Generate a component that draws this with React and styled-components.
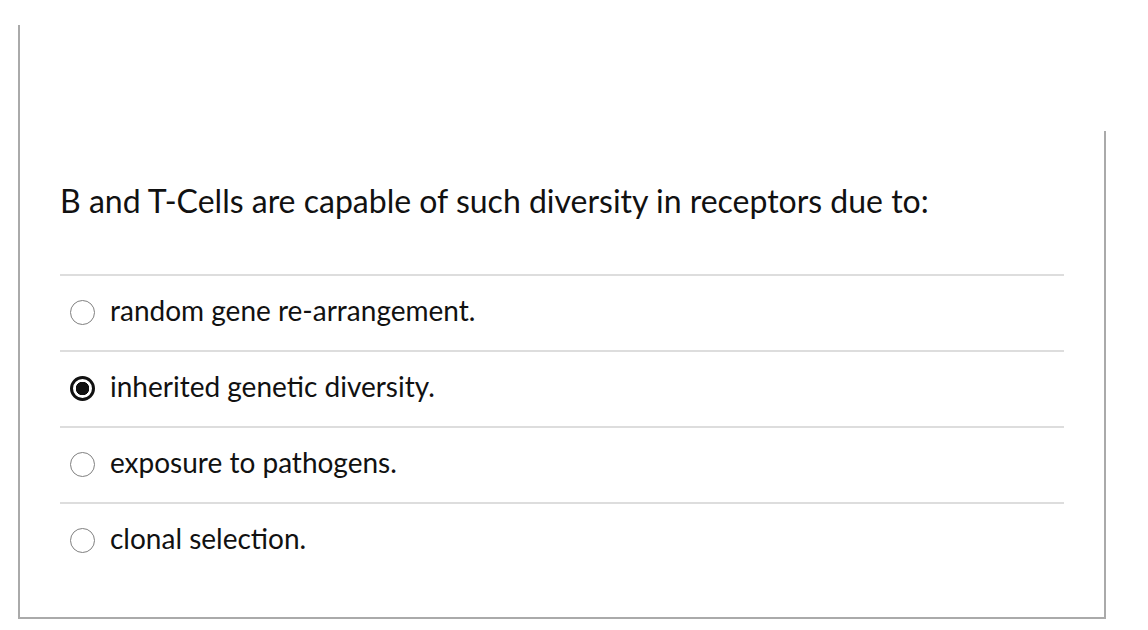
import React, { useState } from "react";
import styled, { createGlobalStyle } from "styled-components";

const GlobalStyle = createGlobalStyle`
  html, body {
    margin: 0;
    padding: 0;
    background: #fff;
  }
  body {
    font-family: Lato, "Liberation Sans", sans-serif;
    color: #111;
  }
`;

const options = [
  "random gene re-arrangement.",
  "inherited genetic diversity.",
  "exposure to pathogens.",
  "clonal selection.",
];

function App() {
  const [picked, setPicked] = useState(1);

  return (
    <>
      <GlobalStyle />
      <Frame>
        <TopGap />
        <QuestionPanel>
          <Prompt>B and T-Cells are capable of such diversity in receptors due to:</Prompt>
          <Answers>
            {options.map((text, i) => (
              <Answer key={text} onClick={() => setPicked(i)}>
                <Radio $checked={picked === i} />
                <AnswerText>{text}</AnswerText>
              </Answer>
            ))}
          </Answers>
        </QuestionPanel>
      </Frame>
    </>
  );
}

export default App;

const Frame = styled.div`
  margin: 25px 0 0 18px;
  width: 1088px;
  height: 594px;
  box-sizing: border-box;
  border-left: 2px solid #aaa;
  border-bottom: 2px solid #aaa;
  display: flex;
  flex-direction: column;
`;

const TopGap = styled.div`
  height: 106px;
  flex: none;
`;

const QuestionPanel = styled.div`
  flex: 1;
  border-right: 2px solid #aaa;
  padding: 51px 40px 0 40px;
`;

const Prompt = styled.p`
  margin: 0 0 54px 0;
  font-size: 32px;
  line-height: 1.2;
  color: #111;
`;

const Answers = styled.div`
  display: flex;
  flex-direction: column;
`;

const Answer = styled.label`
  display: flex;
  align-items: center;
  gap: 15px;
  height: 76px;
  box-sizing: border-box;
  border-top: 2px solid #ddd;
  padding: 0 0 5px 10px;
  cursor: pointer;
`;

const Radio = styled.span`
  width: 25px;
  height: 25px;
  flex: none;
  box-sizing: border-box;
  border-radius: 50%;
  border: ${(p) => (p.$checked ? "3px solid #111" : "1.5px solid #808080")};
  background: ${(p) =>
    p.$checked
      ? "radial-gradient(circle, #111 0 6.5px, #fff 7px)"
      : "#fff"};
  margin-top: 4px;
`;

const AnswerText = styled.span`
  font-size: 28px;
  line-height: 1.2;
  color: #111;
`;
